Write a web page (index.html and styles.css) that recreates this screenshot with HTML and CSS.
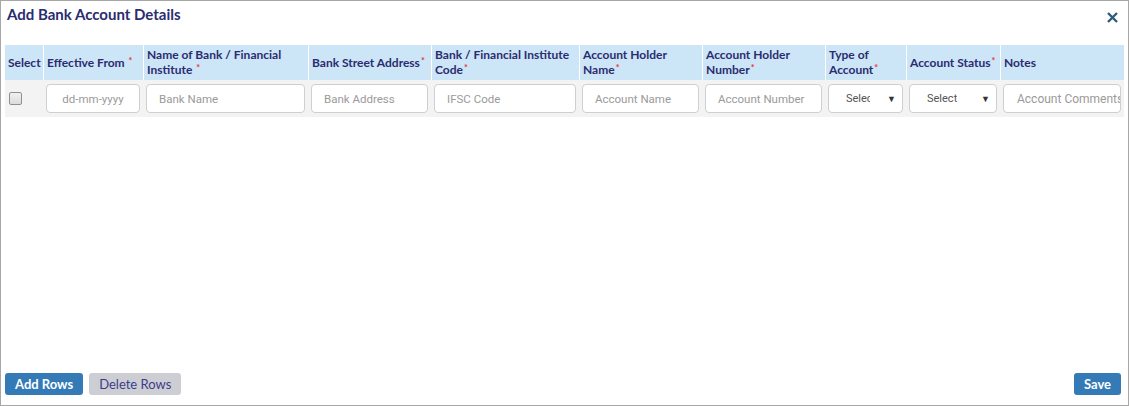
FILE: index.html
```html
<!DOCTYPE html>
<html>
<head>
<meta charset="utf-8">
<link rel="stylesheet" href="styles.css">
</head>
<body>
<div class="modal">
  <div class="modal-head">
    <h1 class="title">Add Bank Account Details</h1>
    <button class="close" aria-label="Close">
      <svg width="11" height="11" viewBox="0 0 11 11"><path d="M1 1 L10 10 M10 1 L1 10" stroke="#2f5c7b" stroke-width="2.4" stroke-linecap="butt"/></svg>
    </button>
  </div>
  <div class="grid">
    <div class="th"><span>Select</span></div>
    <div class="th"><span>Effective From <span class="req">*</span></span></div>
    <div class="th"><span>Name of Bank / Financial Institute <span class="req">*</span></span></div>
    <div class="th"><span>Bank Street Address<span class="req">*</span></span></div>
    <div class="th"><span>Bank / Financial Institute Code<span class="req">*</span></span></div>
    <div class="th"><span>Account Holder Name<span class="req">*</span></span></div>
    <div class="th"><span>Account Holder Number<span class="req">*</span></span></div>
    <div class="th"><span>Type of Account<span class="req">*</span></span></div>
    <div class="th"><span>Account Status<span class="req">*</span></span></div>
    <div class="th"><span>Notes</span></div>

    <div class="td td-check"><span class="check"></span></div>
    <div class="td"><div class="input center">dd-mm-yyyy</div></div>
    <div class="td"><div class="input">Bank Name</div></div>
    <div class="td"><div class="input">Bank Address</div></div>
    <div class="td"><div class="input">IFSC Code</div></div>
    <div class="td"><div class="input">Account Name</div></div>
    <div class="td"><div class="input">Account Number</div></div>
    <div class="td"><div class="input select"><span class="sel-text">Select</span><span class="arrow">▼</span></div></div>
    <div class="td"><div class="input select"><span class="sel-text">Select</span><span class="arrow">▼</span></div></div>
    <div class="td"><div class="input clip">Account Comments</div></div>
  </div>
  <div class="spacer"></div>
  <div class="footer">
    <div class="left">
      <button class="btn primary">Add Rows</button>
      <button class="btn muted">Delete Rows</button>
    </div>
    <button class="btn primary">Save</button>
  </div>
</div>
</body>
</html>
```

FILE: styles.css
```css
html, body {
  margin: 0;
  padding: 0;
  background: #fff;
}
.modal {
  width: 1129px;
  height: 406px;
  box-sizing: border-box;
  border: 1px solid #a7a7a7;
  display: flex;
  flex-direction: column;
  padding: 0 4px 10px 4px;
  font-family: Lato, "Noto Sans", sans-serif;
}
.modal-head {
  display: flex;
  justify-content: space-between;
  align-items: flex-start;
  height: 44px;
}
.title {
  margin: 4px 0 0 2px;
  font-size: 15px;
  line-height: 18px;
  font-weight: 700;
  color: #2b2c6f;
}
.close {
  border: 0;
  background: none;
  padding: 0;
  margin: 11px 6px 0 0;
  width: 11px;
  height: 11px;
  display: block;
}
.close svg { display: block; }
.grid {
  display: grid;
  grid-template-columns: 38px 100px 165px 123px 148px 123px 123px 81px 94px 124px;
  width: 1119px;
}
.th {
  background: #cce5f7;
  height: 35px;
  box-sizing: border-box;
  padding: 2px 2px 3px 3px;
  border-left: 1px solid #fff;
  display: flex;
  align-items: center;
  font-size: 12px;
  line-height: 15px;
  font-weight: 700;
  color: #2b2c6f;
}
.th:first-child { border-left: 0; }
.req {
  color: #e8333a;
  font-size: 9px;
  line-height: 9px;
  vertical-align: 3px;
  margin-left: 1px;
}
.td {
  background: #f3f3f3;
  height: 37px;
  box-sizing: border-box;
  padding: 4px 3px 4px 3px;
  display: flex;
  align-items: stretch;
}
.td-check {
  align-items: center;
  padding-left: 4px;
}
.check {
  width: 11px;
  height: 11px;
  border: 1px solid #8f8f8f;
  border-radius: 2px;
  background: linear-gradient(#f0f0f0, #dcdcdc);
  display: block;
  margin-top: -1px;
}
.input {
  flex: 1;
  min-width: 0;
  background: #fff;
  border: 1px solid #cfcfcf;
  border-radius: 4px;
  box-sizing: border-box;
  height: 29px;
  padding: 0 12px;
  display: flex;
  align-items: center;
  font-family: Roboto, "Liberation Sans", sans-serif;
  font-size: 11.5px;
  color: #9a9a9a;
  white-space: nowrap;
  overflow: hidden;
}
.input.center {
  justify-content: center;
  padding: 0;
}
.input.clip {
  padding: 0 2px 0 13px;
  font-size: 12px;
}
.select {
  position: relative;
  padding: 0 32px 0 17px;
  color: #555;
  font-size: 11px;
}
.sel-text {
  overflow: hidden;
  display: block;
}
.arrow {
  position: absolute;
  right: 6px;
  top: 8px;
  font-size: 9px;
  line-height: 12px;
  color: #333;
}
.spacer { flex: 1; }
.footer {
  display: flex;
  justify-content: space-between;
  align-items: flex-end;
  padding-right: 3px;
}
.left {
  display: flex;
  gap: 6px;
}
.btn {
  height: 22px;
  border: 0;
  border-radius: 3px;
  font-family: Lato, "Noto Sans", sans-serif;
  font-size: 13px;
  line-height: 22px;
  padding: 0 10px;
  cursor: pointer;
}
.primary {
  background: #337ab7;
  color: #fff;
  font-weight: 700;
}
.muted {
  background: #ccced3;
  color: #3c3c8c;
  font-weight: 400;
}
```
